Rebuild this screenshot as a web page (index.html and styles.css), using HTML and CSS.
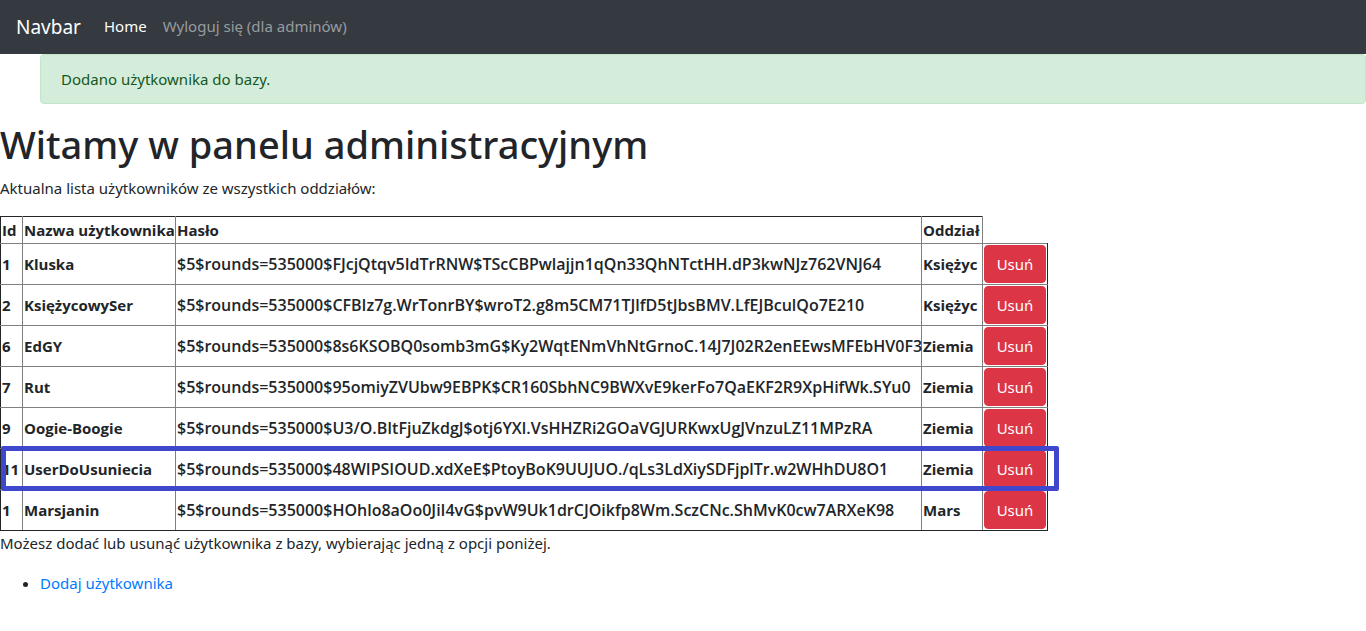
FILE: index.html
```html
<!DOCTYPE html>
<html lang="pl">
<head>
<meta charset="utf-8">
<title>Panel administracyjny</title>
<meta name="viewport" content="width=device-width, initial-scale=1">
<link rel="stylesheet" href="styles.css">
</head>
<body>
<nav class="navbar">
  <a class="navbar-brand" href="#">Navbar</a>
  <ul class="navbar-nav">
    <li><a class="nav-link active" href="#">Home</a></li>
    <li><a class="nav-link" href="#">Wyloguj się (dla adminów)</a></li>
  </ul>
</nav>
<ul class="messages">
  <li class="alert">Dodano użytkownika do bazy.</li>
</ul>
<main>
  <h1 class="title">Witamy w panelu administracyjnym</h1>
  <p class="text">Aktualna lista użytkowników ze wszystkich oddziałów:</p>
  <table class="users">
    <colgroup><col class="col-id"><col class="col-name"><col class="col-hash"><col class="col-branch"><col class="col-action"></colgroup>
    <thead>
      <tr><th>Id</th><th>Nazwa użytkownika</th><th>Hasło</th><th>Oddział</th></tr>
    </thead>
    <tbody>
      <tr><th>1</th><th>Kluska</th><th class="hash">$5$rounds=535000$FJcjQtqv5IdTrRNW$TScCBPwlajjn1qQn33QhNTctHH.dP3kwNJz762VNJ64</th><th>Księżyc</th><td><button class="btn" type="button">Usuń</button></td></tr>
      <tr><th>2</th><th>KsiężycowySer</th><th class="hash">$5$rounds=535000$CFBIz7g.WrTonrBY$wroT2.g8m5CM71TJlfD5tJbsBMV.LfEJBculQo7E210</th><th>Księżyc</th><td><button class="btn" type="button">Usuń</button></td></tr>
      <tr><th>6</th><th>EdGY</th><th class="hash">$5$rounds=535000$8s6KSOBQ0somb3mG$Ky2WqtENmVhNtGrnoC.14J7J02R2enEEwsMFEbHV0F3</th><th>Ziemia</th><td><button class="btn" type="button">Usuń</button></td></tr>
      <tr><th>7</th><th>Rut</th><th class="hash">$5$rounds=535000$95omiyZVUbw9EBPK$CR160SbhNC9BWXvE9kerFo7QaEKF2R9XpHifWk.SYu0</th><th>Ziemia</th><td><button class="btn" type="button">Usuń</button></td></tr>
      <tr><th>9</th><th>Oogie-Boogie</th><th class="hash">$5$rounds=535000$U3/O.BItFjuZkdgJ$otj6YXl.VsHHZRi2GOaVGJURKwxUgJVnzuLZ11MPzRA</th><th>Ziemia</th><td><button class="btn" type="button">Usuń</button></td></tr>
      <tr class="marked"><th>11<span class="marker"></span></th><th>UserDoUsuniecia</th><th class="hash">$5$rounds=535000$48WIPSIOUD.xdXeE$PtoyBoK9UUJUO./qLs3LdXiySDFjplTr.w2WHhDU8O1</th><th>Ziemia</th><td><button class="btn" type="button">Usuń</button></td></tr>
      <tr><th>1</th><th>Marsjanin</th><th class="hash">$5$rounds=535000$HOhlo8aOo0JiI4vG$pvW9Uk1drCJOikfp8Wm.SczCNc.ShMvK0cw7ARXeK98</th><th>Mars</th><td><button class="btn" type="button">Usuń</button></td></tr>
    </tbody>
  </table>
  <p class="text">Możesz dodać lub usunąć użytkownika z bazy, wybierając jedną z opcji poniżej.</p>
  <ul class="options">
    <li><a href="#">Dodaj użytkownika</a></li>
  </ul>
</main>
</body>
</html>
```

FILE: styles.css
```css
*, *::before, *::after { box-sizing: border-box; }

body {
  margin: 0;
  font-family: "Segoe UI", "Noto Sans", sans-serif;
  font-size: 15px;
  line-height: 24px;
  color: #212529;
  background: #fff;
}

a { color: #007bff; text-decoration: none; }

.navbar {
  display: flex;
  align-items: center;
  padding: 7px 16px;
  background: #343a40;
}
.navbar-brand {
  margin-right: 15px;
  padding: 5px 0;
  font-size: 19px;
  line-height: 30px;
  color: #fff;
}
.navbar-nav { display: flex; margin: 0; padding: 0; list-style: none; }
.nav-link { display: block; padding: 7px 8px 9px; color: #999c9f; }
.nav-link.active { color: #fff; }

.messages { margin: 0 0 16px; padding: 0 0 0 40px; list-style: none; }
.alert {
  padding: 12px 20px;
  border: 1px solid #c3e6cb;
  border-radius: 4px;
  color: #155724;
  background: #d4edda;
}

.title {
  margin: 0 0 8px;
  font-family: "Segoe UI", "Noto Sans", sans-serif;
  font-size: 38px;
  font-weight: 500;
  line-height: 48px;
}
.text { margin: 0 0 16px; }

.users {
  border-collapse: collapse;
  border-left: 1px solid #212529;
  border-bottom: 1px solid #212529;
}
.users th, .users td {
  padding: 1px;
  border: 1px solid #808080;
  text-align: left;
  white-space: nowrap;
}
.users th { font-family: "Segoe UI", "Open Sans", sans-serif; }
.users .hash { max-width: 746px; padding-right: 0; font-size: 16px; font-weight: 600; }
.users thead th { border-top-color: #212529; }
.users th:first-child { border-left-color: #212529; }
.users th:nth-child(2) { padding-right: 0; }
.users td { border-right-color: #212529; }
.users tbody tr:last-child > * { border-bottom-color: #212529; }
.col-id { width: 22px; }
.col-name { width: 153px; }
.col-hash { width: 746px; }
.col-branch { width: 61px; }
.col-action { width: 65px; }

.btn {
  display: block;
  width: 100%;
  padding: 6px 11px;
  border: 1px solid #dc3545;
  border-radius: 4px;
  font: inherit;
  color: #fff;
  background: #dc3545;
}

.marked { position: relative; }
.marker {
  position: absolute;
  inset: -3px -11px -1px 0;
  border: 5px solid #3f48cc;
  border-radius: 2px;
  pointer-events: none;
}

.options { margin: 0 0 16px; padding-left: 40px; }
```
